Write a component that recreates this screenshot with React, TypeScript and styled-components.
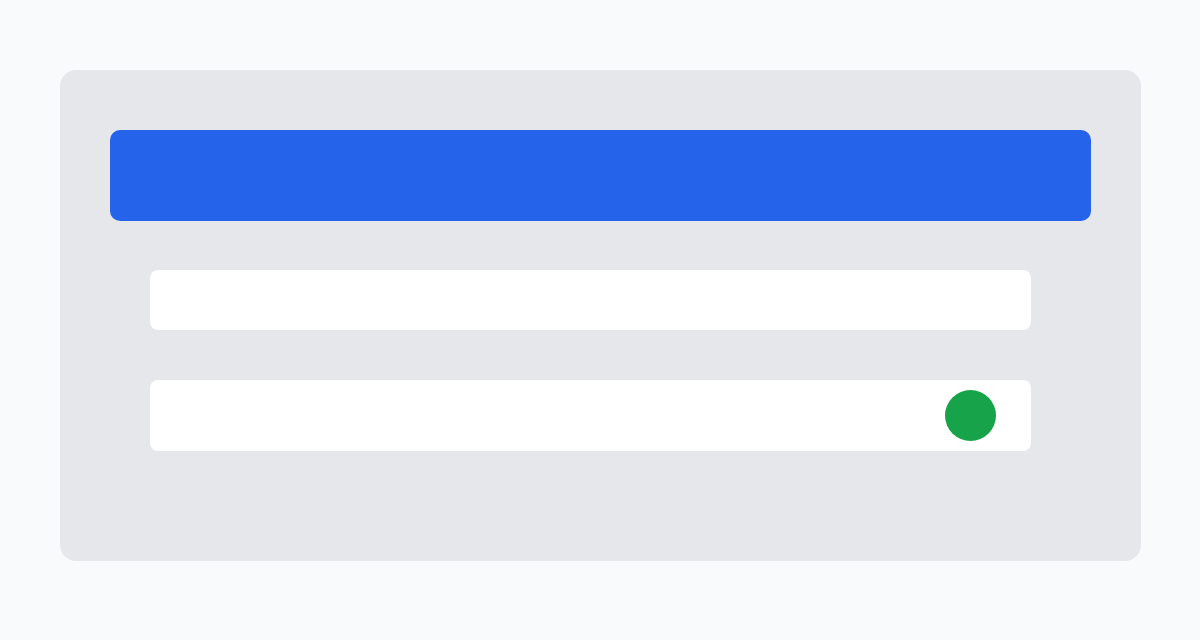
import React from 'react';
import styled, { createGlobalStyle } from 'styled-components';

const GlobalStyle = createGlobalStyle`
	html, body {
		margin: 0;
		padding: 0;
		background: #f9fafb;
		font-family: 'Inter', 'Liberation Sans', sans-serif;
	}
`;

const StyledPage = styled.div`
	width: 1200px;
	height: 640px;
	box-sizing: border-box;
	padding: 70px 59px 79px 60px;
`;

const StyledCard = styled.div`
	background: #e5e7eb;
	border-radius: 16px;
	height: 491px;
	box-sizing: border-box;
	padding: 60px 50px;
	display: flex;
	flex-direction: column;
	gap: 49px;
`;

const StyledBanner = styled.div`
	background: #2563eb;
	border-radius: 10px;
	height: 91px;
`;

const StyledRows = styled.div`
	display: flex;
	flex-direction: column;
	gap: 50px;
	padding: 0 60px 0 40px;
`;

const StyledRow = styled.div<{ tall?: boolean }>`
	background: #ffffff;
	border-radius: 8px;
	height: ${({ tall }) => (tall ? '71px' : '60px')};
	display: flex;
	align-items: center;
	justify-content: flex-end;
	padding-right: 35px;
`;

const StyledDot = styled.span`
	width: 51px;
	height: 51px;
	border-radius: 50%;
	background: #16a34a;
`;

const App = () => (
	<>
		<GlobalStyle />
		<StyledPage>
			<StyledCard>
				<StyledBanner />
				<StyledRows>
					<StyledRow />
					<StyledRow tall>
						<StyledDot />
					</StyledRow>
				</StyledRows>
			</StyledCard>
		</StyledPage>
	</>
);

export default App;
